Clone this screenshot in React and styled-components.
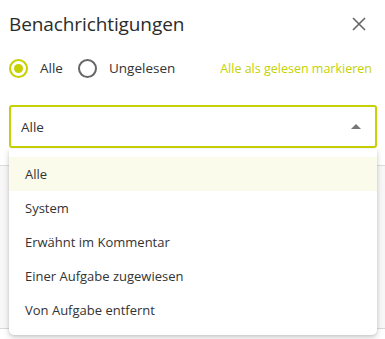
import React from "react";
import styled, { createGlobalStyle } from "styled-components";

const Global = createGlobalStyle`
  html, body { margin: 0; padding: 0; background: #fff; }
  body { font-family: "Open Sans", "Noto Sans", sans-serif; color: #333; }
  * { box-sizing: border-box; }
`;

const LIME = "#c5d100";

const Panel = styled.div`
  width: 385px;
  height: 339px;
  position: relative;
  overflow: hidden;
  background: #fff;
`;

const Header = styled.div`
  display: flex;
  align-items: center;
  justify-content: space-between;
  padding: 7px 17px 0 9px;
  height: 40px;
`;

const Title = styled.h1`
  margin: 0;
  font-size: 19px;
  font-weight: 400;
  color: #2b2b2b;
  letter-spacing: -0.1px;
`;

const Close = styled.button`
  border: 0;
  background: none;
  padding: 0;
  width: 18px;
  height: 18px;
  display: flex;
  align-items: center;
  justify-content: center;
  cursor: pointer;
`;

const FilterRow = styled.div`
  display: flex;
  align-items: center;
  padding: 0 13px 0 9px;
  height: 44px;
  margin-top: 6px;
`;

const RadioLabel = styled.label`
  display: flex;
  align-items: center;
  gap: 12px;
  font-size: 13.5px;
  color: #333;
  margin-right: 15px;
`;

const RadioCircle = styled.span`
  width: 19px;
  height: 19px;
  border-radius: 50%;
  border: 2px solid ${(p) => (p.$on ? LIME : "#666")};
  display: flex;
  align-items: center;
  justify-content: center;
  &::after {
    content: "";
    width: 9px;
    height: 9px;
    border-radius: 50%;
    background: ${(p) => (p.$on ? LIME : "transparent")};
  }
`;

const MarkLink = styled.a`
  margin-left: auto;
  font-size: 12.5px;
  color: ${LIME};
  text-decoration: none;
  cursor: pointer;
`;

const SelectWrap = styled.div`
  padding: 15px 8px 0 9px;
  position: relative;
`;

const SelectBox = styled.div`
  height: 43px;
  border: 2px solid ${LIME};
  border-radius: 3px;
  display: flex;
  align-items: center;
  justify-content: space-between;
  padding: 0 14px 0 10px;
  font-size: 13.5px;
  color: #333;
`;

const Caret = styled.span`
  width: 0;
  height: 0;
  border-left: 5px solid transparent;
  border-right: 5px solid transparent;
  border-bottom: 5px solid #777;
`;

const Content = styled.div`
  margin-top: 17px;
  height: 164px;
  border-top: 1px solid #dcdcdc;
  border-bottom: 1px solid #d8d8d8;
  background: #f7f7f7;
`;

const Menu = styled.ul`
  position: absolute;
  left: 9px;
  right: 8px;
  top: 149px;
  margin: 0;
  padding: 8px 0;
  list-style: none;
  background: #fff;
  border-radius: 0 0 5px 5px;
  box-shadow: 0 3px 6px rgba(0, 0, 0, 0.16), 0 1px 3px rgba(0, 0, 0, 0.1);
`;

const Item = styled.li`
  height: 34px;
  display: flex;
  align-items: center;
  padding-left: 16px;
  font-size: 13px;
  color: #333;
  background: ${(p) => (p.$active ? "#fafbeb" : "#fff")};
`;

const items = [
  "Alle",
  "System",
  "Erwähnt im Kommentar",
  "Einer Aufgabe zugewiesen",
  "Von Aufgabe entfernt",
];

export default function App() {
  return (
    <>
      <Global />
      <Panel>
        <Header>
          <Title>Benachrichtigungen</Title>
          <Close aria-label="Schließen">
            <svg width="16" height="16" viewBox="0 0 16 16">
              <path d="M2 2 L14 14 M14 2 L2 14" stroke="#666" strokeWidth="1.6" fill="none" />
            </svg>
          </Close>
        </Header>
        <FilterRow>
          <RadioLabel>
            <RadioCircle $on />
            Alle
          </RadioLabel>
          <RadioLabel>
            <RadioCircle />
            Ungelesen
          </RadioLabel>
          <MarkLink>Alle als gelesen markieren</MarkLink>
        </FilterRow>
        <SelectWrap>
          <SelectBox>
            <span>Alle</span>
            <Caret />
          </SelectBox>
        </SelectWrap>
        <Content />
        <Menu>
          {items.map((t, i) => (
            <Item key={t} $active={i === 0}>
              {t}
            </Item>
          ))}
        </Menu>
      </Panel>
    </>
  );
}
